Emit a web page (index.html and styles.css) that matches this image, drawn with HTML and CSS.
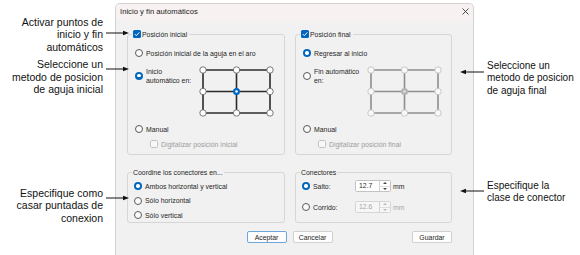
FILE: index.html
```html
<!DOCTYPE html>
<html lang="es">
<head>
<meta charset="utf-8">
<title>Inicio y fin automáticos</title>
<link rel="stylesheet" href="styles.css">
</head>
<body>
<div class="page">
  <div class="notes notes-left">
    <div class="note note-l1">
      <div class="note-text">Activar puntos de<br>inicio y fin<br>automáticos</div>
      <svg class="arrow arrow-r" width="23" height="6" viewBox="0 0 23 6"><line x1="0" y1="3" x2="19" y2="3"/><polygon points="23,3 17,0.8 17,5.2"/></svg>
    </div>
    <div class="note note-l2">
      <div class="note-text">Seleccione un<br>metodo de posicion<br>de aguja inicial</div>
      <svg class="arrow arrow-r" width="23" height="6" viewBox="0 0 23 6"><line x1="0" y1="3" x2="19" y2="3"/><polygon points="23,3 17,0.8 17,5.2"/></svg>
    </div>
    <div class="note note-l3">
      <div class="note-text">Especifique como<br>casar puntadas de<br>conexion</div>
      <svg class="arrow arrow-r" width="23" height="6" viewBox="0 0 23 6"><line x1="0" y1="3" x2="19" y2="3"/><polygon points="23,3 17,0.8 17,5.2"/></svg>
    </div>
  </div>

  <div class="dialog">
    <div class="titlebar">
      <span class="title">Inicio y fin automáticos</span>
      <svg class="close" width="7" height="7" viewBox="0 0 7 7"><line x1="0.5" y1="0.5" x2="6.5" y2="6.5"/><line x1="6.5" y1="0.5" x2="0.5" y2="6.5"/></svg>
    </div>
    <div class="dlg-body">
      <div class="groups">
        <fieldset class="group group-top">
          <legend class="legend-chk"><span class="chk on"><svg width="8" height="8" viewBox="0 0 8 8"><path d="M1.8 4.1 L3.3 5.6 L6.3 2.4"/></svg></span>Posición inicial</legend>
          <div class="opt r1"><span class="radio"></span><span>Posición inicial de la aguja en el aro</span></div>
          <div class="opt-auto">
            <div class="opt-label"><span class="radio on"></span><span>Inicio<br>automático en:</span></div>
            <svg class="grid-pick" width="75" height="51" viewBox="0 0 75 51">
              <g class="gl">
                <line x1="4" y1="4" x2="71" y2="4"/><line x1="4" y1="25.5" x2="71" y2="25.5"/><line x1="4" y1="47" x2="71" y2="47"/>
                <line x1="4" y1="4" x2="4" y2="47"/><line x1="37.5" y1="4" x2="37.5" y2="47"/><line x1="71" y1="4" x2="71" y2="47"/>
              </g>
              <g class="gc">
                <circle cx="4" cy="4" r="3.2"/><circle cx="37.5" cy="4" r="3.2"/><circle cx="71" cy="4" r="3.2"/>
                <circle cx="4" cy="25.5" r="3.2"/><circle cx="71" cy="25.5" r="3.2"/>
                <circle cx="4" cy="47" r="3.2"/><circle cx="37.5" cy="47" r="3.2"/><circle cx="71" cy="47" r="3.2"/>
              </g>
              <circle class="gsel" cx="37.5" cy="25.5" r="3.5"/><circle class="gdot" cx="37.5" cy="25.5" r="1.3"/>
            </svg>
          </div>
          <div class="opt r3"><span class="radio"></span><span>Manual</span></div>
          <div class="opt r4 disabled"><span class="chk off"></span><span>Digitalizar posición inicial</span></div>
        </fieldset>

        <fieldset class="group group-top">
          <legend class="legend-chk"><span class="chk on"><svg width="8" height="8" viewBox="0 0 8 8"><path d="M1.8 4.1 L3.3 5.6 L6.3 2.4"/></svg></span>Posición final</legend>
          <div class="opt r1"><span class="radio on"></span><span>Regresar al inicio</span></div>
          <div class="opt-auto">
            <div class="opt-label"><span class="radio"></span><span>Fin automático<br>en:</span></div>
            <svg class="grid-pick grid-off" width="75" height="51" viewBox="0 0 75 51">
              <g class="gl">
                <line x1="4" y1="4" x2="71" y2="4"/><line x1="4" y1="25.5" x2="71" y2="25.5"/><line x1="4" y1="47" x2="71" y2="47"/>
                <line x1="4" y1="4" x2="4" y2="47"/><line x1="37.5" y1="4" x2="37.5" y2="47"/><line x1="71" y1="4" x2="71" y2="47"/>
              </g>
              <g class="gc">
                <circle cx="4" cy="4" r="3.2"/><circle cx="37.5" cy="4" r="3.2"/><circle cx="71" cy="4" r="3.2"/>
                <circle cx="4" cy="25.5" r="3.2"/><circle cx="71" cy="25.5" r="3.2"/>
                <circle cx="4" cy="47" r="3.2"/><circle cx="37.5" cy="47" r="3.2"/><circle cx="71" cy="47" r="3.2"/>
              </g>
              <circle class="gsel" cx="37.5" cy="25.5" r="3.5"/><circle class="gdot" cx="37.5" cy="25.5" r="1.3"/>
            </svg>
          </div>
          <div class="opt r3"><span class="radio"></span><span>Manual</span></div>
          <div class="opt r4 disabled"><span class="chk off"></span><span>Digitalizar posición final</span></div>
        </fieldset>
      </div>

      <div class="groups groups-bottom">
        <fieldset class="group group-bottom">
          <legend class="legend-txt">Coordine los conectores en...</legend>
          <div class="opt b1"><span class="radio on"></span><span>Ambos horizontal y vertical</span></div>
          <div class="opt b2"><span class="radio"></span><span>Sólo horizontal</span></div>
          <div class="opt b2"><span class="radio"></span><span>Sólo vertical</span></div>
        </fieldset>

        <fieldset class="group group-bottom">
          <legend class="legend-txt">Conectores</legend>
          <div class="opt in-row in1">
            <span class="radio on"></span><span class="in-lbl">Salto:</span>
            <span class="num"><span class="num-val">12.7</span><span class="spin"><span class="up"></span><span class="down"></span></span></span>
            <span class="unit">mm</span>
          </div>
          <div class="opt in-row in2 disabled-in">
            <span class="radio"></span><span class="in-lbl">Corrido:</span>
            <span class="num"><span class="num-val">12.6</span><span class="spin"><span class="up"></span><span class="down"></span></span></span>
            <span class="unit">mm</span>
          </div>
        </fieldset>
      </div>

      <div class="buttons">
        <div class="btn-pair">
          <span class="btn primary">Aceptar</span>
          <span class="btn">Cancelar</span>
        </div>
        <span class="btn btn-save">Guardar</span>
      </div>
    </div>
  </div>

  <div class="notes notes-right">
    <div class="note note-r1">
      <svg class="arrow arrow-l" width="24" height="6" viewBox="0 0 24 6"><line x1="4" y1="3" x2="24" y2="3"/><polygon points="0,3 6,0.8 6,5.2"/></svg>
      <div class="note-text">Seleccione un<br>metodo de posicion<br>de aguja final</div>
    </div>
    <div class="note note-r2">
      <svg class="arrow arrow-l" width="24" height="6" viewBox="0 0 24 6"><line x1="4" y1="3" x2="24" y2="3"/><polygon points="0,3 6,0.8 6,5.2"/></svg>
      <div class="note-text">Especifique la<br>clase de conector</div>
    </div>
  </div>
</div>
</body>
</html>
```
FILE: styles.css
```css
* { box-sizing: border-box; }
html, body { margin: 0; padding: 0; background: #ffffff; }
body { width: 580px; height: 255px; overflow: hidden; }

.page {
  display: flex;
  align-items: flex-start;
  height: 255px;
  overflow: hidden;
}

/* ---------- annotations ---------- */
.notes {
  position: relative;
  z-index: 2;
  display: flex;
  flex-direction: column;
  font-family: "Liberation Sans", Arial, sans-serif;
  font-size: 10.5px;
  line-height: 12.5px;
  color: #111111;
}
.note { display: flex; align-items: flex-start; }
.arrow { display: block; flex-shrink: 0; }
.arrow line { stroke: #111; stroke-width: 1; }
.arrow polygon { fill: #111; }

.notes-left { width: 115px; flex-shrink: 0; padding-top: 15.75px; }
.notes-left .note-text { width: 103px; flex-shrink: 0; text-align: right; }
.notes-left .arrow { margin-left: 3px; }
.note-l1 .arrow { margin-top: 14px; }
.note-l2 { margin-top: 4.75px; }
.note-l2 .arrow { margin-top: 8px; }
.note-l3 { margin-top: 91px; }
.note-l3 .arrow { margin-top: 8.5px; }

.notes-right { margin-left: -14px; flex: 1; font-size: 10px; }
.notes-right .arrow { margin-right: 3px; }
.notes-right .note-text { white-space: nowrap; }
.note-r1 { margin-top: 59.75px; }
.note-r1 .arrow { margin-top: 9px; }
.note-r2 { margin-top: 82.5px; }
.note-r2 .arrow { margin-top: 8px; }

/* ---------- dialog ---------- */
.dialog {
  width: 359px;
  flex-shrink: 0;
  margin-top: 3px;
  border: 1px solid #d2d2d2;
  border-bottom: none;
  border-radius: 5px 5px 0 0;
  background: #f1f1f1;
  font-family: "Liberation Sans", Arial, sans-serif;
  font-size: 6.9px;
  color: #1f1f1f;
  overflow: hidden;
}
.titlebar {
  height: 17px;
  display: flex;
  align-items: center;
  padding: 0 4px 3px 4px;
  background: #f8f1f1;
}
.title { font-size: 7.7px; color: #222; }
.close { margin-left: auto; display: block; }
.close line { stroke: #3a3a3a; stroke-width: 0.9; }

.dlg-body { padding: 8.5px 21px 20px 11px; }

.groups {
  display: grid;
  grid-template-columns: 158px 157px;
  column-gap: 10px;
}
.groups-bottom { margin-top: 12.5px; }

.group {
  margin: 0;
  min-width: 0;
  border: 1px solid #d6d6d6;
  border-radius: 3px;
}
.group-top { padding: 0 0 5px 7px; }
.group-bottom { padding: 0 0 2px 6px; }

.legend-chk {
  display: flex;
  align-items: center;
  gap: 1px;
  height: 9px;
  line-height: 9px;
  padding: 0 2px 0 1px;
  margin-left: -3px;
}
.legend-txt {
  height: 9px;
  line-height: 9px;
  padding: 0 1px;
  margin-left: -2px;
}

/* controls */
.opt { display: flex; align-items: center; gap: 3px; height: 10px; white-space: nowrap; }
.radio {
  width: 8px;
  height: 8px;
  flex-shrink: 0;
  border-radius: 50%;
  border: 1px solid #5a5a5a;
  background: #fbfbfb;
}
.radio.on {
  border: none;
  background: #0067c0;
  display: grid;
  place-items: center;
}
.radio.on::after {
  content: "";
  width: 3.4px;
  height: 3.4px;
  border-radius: 50%;
  background: #ffffff;
}
.chk {
  width: 8px;
  height: 8px;
  flex-shrink: 0;
  border-radius: 1.5px;
  display: block;
}
.chk.on { background: #0067c0; }
.chk.on svg { display: block; }
.chk.on path { fill: none; stroke: #fff; stroke-width: 1; }
.chk.off { border: 1px solid #c4c4c4; background: #f7f7f7; }

.r1 { margin-top: 9.5px; }
.opt-auto { display: flex; align-items: flex-start; height: 51px; margin-top: 8px; }
.opt-label {
  display: flex;
  align-items: center;
  gap: 3px;
  width: 64px;
  flex-shrink: 0;
  margin-top: 0.5px;
  line-height: 9px;
  white-space: nowrap;
}
.grid-pick { display: block; }
.grid-pick .gl line { stroke: #2b2b2b; stroke-width: 1.6; }
.grid-pick .gc circle { fill: #ffffff; stroke: #5a5a5a; stroke-width: 0.8; }
.grid-pick .gsel { fill: #0067c0; }
.grid-pick .gdot { fill: #ffffff; }
.grid-off .gl line { stroke: #8e8e8e; }
.grid-off .gc circle { fill: #f9f9f9; stroke: #bdbdbd; }
.grid-off .gsel { fill: #b3b3b3; }
.grid-off .gdot { fill: #e2e2e2; }

.r3 { margin-top: 7px; }
.r4 { margin-top: 5px; padding-left: 15px; }
.disabled { color: #9c9c9c; }

.b1 { margin-top: 4.5px; }
.b2 { margin-top: 4.5px; }

.in-row { height: 12px; }
.in1 { margin-top: 3.5px; }
.in2 { margin-top: 9px; }
.in-lbl { width: 42px; flex-shrink: 0; }
.num {
  width: 36px;
  height: 12px;
  display: flex;
  border: 1px solid #c2c2c2;
  border-radius: 1.5px;
  background: #ffffff;
  margin-left: -3px;
}
.num-val { flex: 1; padding-left: 3px; line-height: 10px; }
.spin {
  width: 11px;
  display: flex;
  flex-direction: column;
  border-left: 1px solid #d4d4d4;
}
.spin span { flex: 1; display: grid; place-items: center; }
.spin .up { border-bottom: 1px solid #dedede; }
.spin .up::after {
  content: "";
  border-left: 2px solid transparent;
  border-right: 2px solid transparent;
  border-bottom: 2.5px solid #444;
}
.spin .down::after {
  content: "";
  border-left: 2px solid transparent;
  border-right: 2px solid transparent;
  border-top: 2.5px solid #444;
}
.unit { margin-left: -1px; }
.disabled-in .num { background: #f6f6f6; border-color: #d6d6d6; color: #a6a6a6; }
.disabled-in .spin .up::after { border-bottom-color: #b8b8b8; }
.disabled-in .spin .down::after { border-top-color: #b8b8b8; }
.disabled-in .unit { color: #a6a6a6; }

/* buttons */
.buttons {
  display: grid;
  grid-template-columns: 1fr auto 1fr;
  margin-top: 8px;
}
.btn-pair { grid-column: 2; display: flex; gap: 6px; }
.btn {
  width: 40px;
  height: 12px;
  display: flex;
  align-items: center;
  justify-content: center;
  border: 1px solid #d0d0d0;
  border-radius: 2px;
  background: #fdfdfd;
  color: #1f1f1f;
}
.btn.primary { border-color: #6ea6dc; }
.btn-save { grid-column: 3; justify-self: end; }
```
